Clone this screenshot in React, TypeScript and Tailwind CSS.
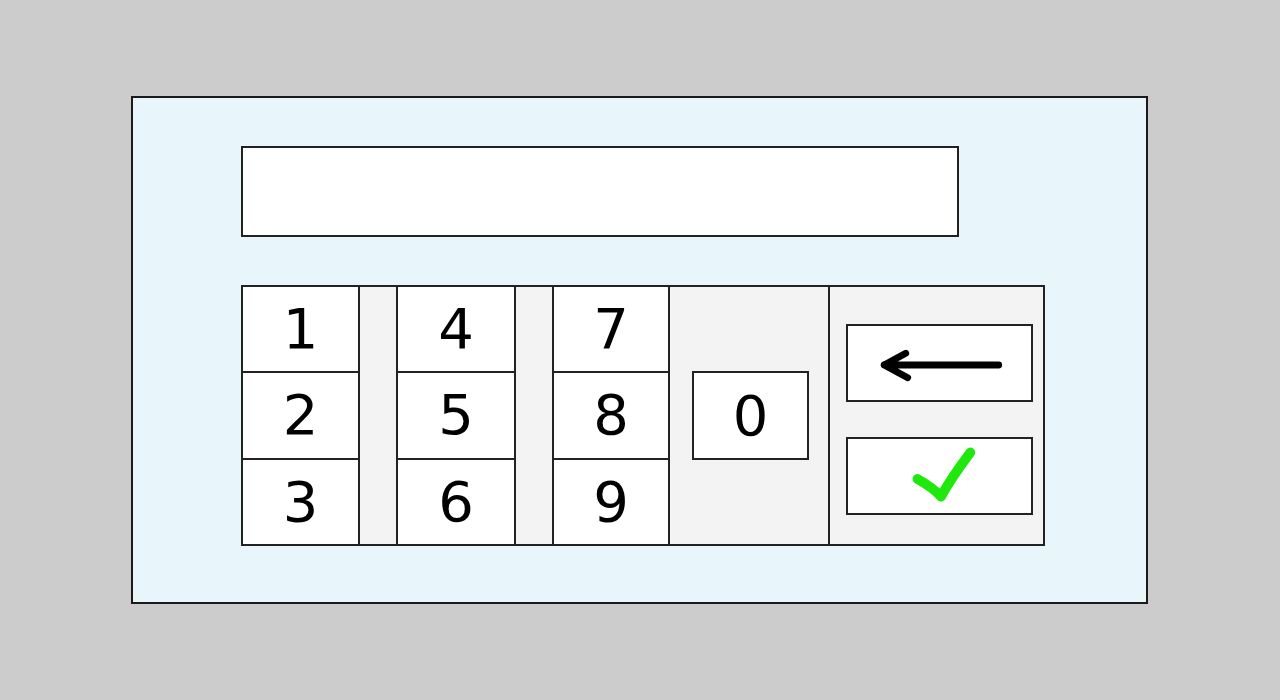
import React, { useState } from 'react';

const digitFont = { fontFamily: '"DejaVu Sans", Verdana, sans-serif' };

const Cell = ({ label, last, onPress }: { label: string; last?: boolean; onPress: (d: string) => void }) => (
    <button
        onClick={() => onPress(label)}
        className={`flex-1 flex items-center justify-center bg-white text-[56px] leading-none text-black ${last ? '' : 'border-b-2 border-[#222]'}`}
        style={digitFont}
    >
        {label}
    </button>
);

const Keypad: React.FC = () => {
    const [value, setValue] = useState('');

    const press = (d: string) => setValue((v) => v + d);
    const back = () => setValue((v) => v.slice(0, -1));

    return (
        <div className="w-full h-[700px] bg-[#cccccc] pt-[96px] pl-[131px]">
            <div className="w-[1017px] h-[508px] border-2 border-[#1a1a1a] bg-[#e8f6fb] pt-[48px] pl-[108px]">
                <div
                    className="w-[718px] h-[91px] border-2 border-[#222] bg-white px-4 flex items-center text-[40px]"
                    style={digitFont}
                >
                    {value}
                </div>

                <div className="mt-[48px] w-[804px] h-[261px] border-2 border-[#222] bg-[#f3f3f3] flex">
                    <div className="w-[117px] flex flex-col border-r-2 border-[#222]">
                        <Cell label="1" onPress={press} />
                        <Cell label="2" onPress={press} />
                        <Cell label="3" last onPress={press} />
                    </div>
                    <div className="w-[36px]" />
                    <div className="w-[120px] flex flex-col border-x-2 border-[#222]">
                        <Cell label="4" onPress={press} />
                        <Cell label="5" onPress={press} />
                        <Cell label="6" last onPress={press} />
                    </div>
                    <div className="w-[36px]" />
                    <div className="w-[118px] flex flex-col border-x-2 border-[#222]">
                        <Cell label="7" onPress={press} />
                        <Cell label="8" onPress={press} />
                        <Cell label="9" last onPress={press} />
                    </div>

                    <div className="w-[158px] flex items-center pl-[22px]">
                        <button
                            onClick={() => press('0')}
                            className="w-[117px] h-[89px] border-2 border-[#222] bg-white flex items-center justify-center text-[56px] leading-none text-black"
                            style={digitFont}
                        >
                            0
                        </button>
                    </div>

                    <div className="flex-1 border-l-2 border-[#222] pl-[16px] pt-[37px] flex flex-col gap-[35px]">
                        <button
                            onClick={back}
                            className="w-[187px] h-[78px] border-2 border-[#222] bg-white flex items-center justify-center"
                        >
                            <svg width="187" height="78" viewBox="0 0 187 78">
                                <path
                                    d="M37 41 L154 41 M37 41 L59 29 M37 41 L61 54"
                                    fill="none"
                                    stroke="#000"
                                    strokeWidth="7"
                                    strokeLinecap="round"
                                    strokeLinejoin="round"
                                />
                            </svg>
                        </button>
                        <button
                            onClick={() => setValue('')}
                            className="w-[187px] h-[78px] border-2 border-[#222] bg-white flex items-center justify-center"
                        >
                            <svg width="187" height="78" viewBox="0 0 187 78">
                                <path
                                    d="M71 42 C80 47 89 53 95 60 C101 49 113 31 125 15"
                                    fill="none"
                                    stroke="#1fe80c"
                                    strokeWidth="10"
                                    strokeLinecap="round"
                                    strokeLinejoin="round"
                                />
                            </svg>
                        </button>
                    </div>
                </div>
            </div>
        </div>
    );
};

export default Keypad;
